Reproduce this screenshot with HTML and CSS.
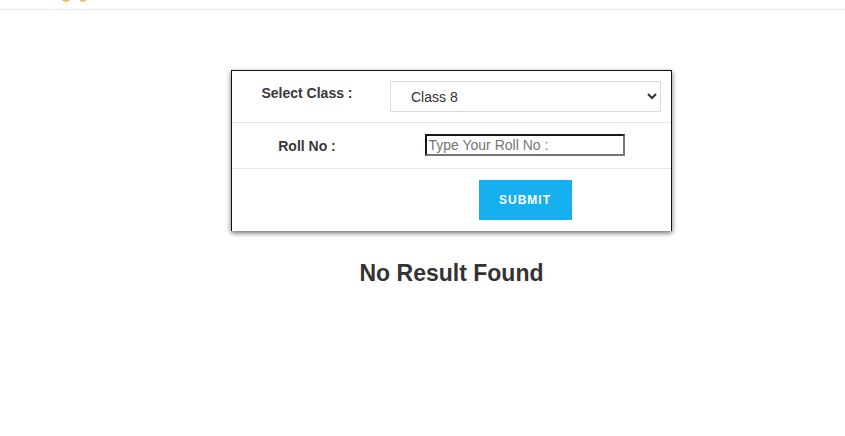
FILE: index.html
```html
<!DOCTYPE html>
<html lang="en">
<head>
<meta charset="utf-8">
<title>Result</title>
<link rel="stylesheet" href="styles.css">
</head>
<body>
<header class="topbar">
  <svg class="logo" width="30" height="9" viewBox="0 0 30 9" aria-hidden="true">
    <ellipse cx="4" cy="-3" rx="5" ry="5" fill="#f7b865"/>
    <ellipse cx="21" cy="-3" rx="4.5" ry="5" fill="#f7b865"/>
  </svg>
</header>
<main class="page">
  <form class="card">
    <div class="row row-class">
      <label class="label" for="cls">Select Class :</label>
      <div class="field">
        <select id="cls" class="select">
          <option>Class 8</option>
        </select>
      </div>
    </div>
    <div class="row row-roll">
      <label class="label" for="roll">Roll No :</label>
      <div class="field">
        <input id="roll" class="input" type="text" placeholder="Type Your Roll No :">
      </div>
    </div>
    <div class="row row-submit">
      <div class="label"></div>
      <div class="field">
        <button type="button" class="btn">SUBMIT</button>
      </div>
    </div>
  </form>
  <h2 class="empty">No Result Found</h2>
</main>
</body>
</html>
```

FILE: styles.css
```css
html, body {
  margin: 0;
  padding: 0;
  background: #fff;
}
body {
  font-family: "Liberation Sans", Arial, sans-serif;
  color: #333;
}
.topbar {
  height: 9px;
  border-bottom: 1px solid #ebebeb;
  padding-left: 62px;
  overflow: hidden;
  display: flex;
  align-items: flex-start;
}
.logo {
  display: block;
}
.page {
  width: 441px;
  margin: 60px 0 0 231px;
}
.card {
  margin: 0;
  border: 1px solid #111;
  border-bottom: none;
  box-shadow: 0 2px 5px rgba(0, 0, 0, 0.6);
  background: #fff;
}
.row {
  display: grid;
  grid-template-columns: 150px 1fr;
  align-items: start;
}
.row + .row {
  border-top: 1px solid #e6e6e6;
}
.row-class {
  height: 51px;
  padding-top: 10px;
  box-sizing: border-box;
}
.row-roll {
  height: 46px;
  padding-top: 11px;
  box-sizing: border-box;
}
.row-submit {
  height: 63px;
  padding-top: 11px;
  box-sizing: border-box;
}
.label {
  text-align: center;
  font-size: 14px;
  font-weight: bold;
  color: #383838;
}
.row-class .label {
  padding-top: 4px;
}
.row-roll .label {
  padding-top: 4px;
}
.field {
  display: flex;
  justify-content: center;
}
.select {
  width: 271px;
  height: 31px;
  margin-left: -2px;
  border: 1px solid #dcdcdc;
  border-radius: 0;
  background: #fff;
  font-family: "Liberation Sans", Arial, sans-serif;
  font-size: 14px;
  color: #333;
  padding: 0 6px 0 16px;
  outline: none;
}
.input {
  width: 200px;
  height: 22px;
  box-sizing: border-box;
  margin-left: -4px;
  border-width: 2px;
  border-style: solid;
  border-color: #1a1a1a #767676 #767676 #1a1a1a;
  padding: 1px 2px;
  font-family: "Liberation Sans", Arial, sans-serif;
  font-size: 14px;
  color: #333;
  outline: none;
}
.input::placeholder {
  color: #757575;
}
.btn {
  width: 93px;
  height: 40px;
  margin-left: -3px;
  border: none;
  background: #16b0f0;
  color: #fff;
  font-family: "Liberation Sans", Arial, sans-serif;
  font-size: 12px;
  font-weight: bold;
  letter-spacing: 1px;
  padding: 0;
}
.empty {
  margin: 29px 0 0;
  text-align: center;
  font-size: 23px;
  font-weight: bold;
  color: #333;
}
```
